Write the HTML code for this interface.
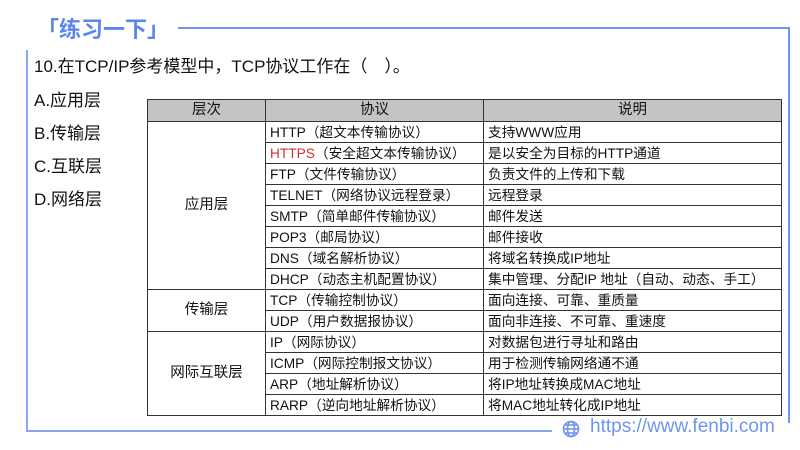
<!DOCTYPE html>
<html><head><meta charset="utf-8"><style>
body{margin:0;width:800px;height:450px;background:#fff;position:relative;overflow:hidden;font-family:"Liberation Sans","Noto Sans CJK SC",sans-serif;}
.abs{position:absolute}
.title{left:37px;top:12px;font-size:22px;font-weight:bold;color:#5b86ee}
.q{left:34px;font-size:17px;color:#111}
table{position:absolute;left:147px;top:99px;width:635px;border-collapse:collapse;font-size:13.7px;color:#111}
td,th{border:1.5px solid #333;padding:0 4px;height:20px;line-height:19px;white-space:nowrap}
th{background:#c4c4c4;font-weight:normal;font-size:14.5px;text-align:center;height:21px}
td.c{text-align:center;font-size:14.5px}
</style></head><body>
<div class="abs title">「练习一下」</div>
<div class="abs" style="left:178px;top:27px;width:612px;height:2px;background:#6f95f0"></div>
<div class="abs" style="left:788px;top:27px;width:2px;height:396px;background:#6f95f0"></div>
<div class="abs" style="left:26px;top:50px;width:2px;height:382px;background:#8aa6f2"></div>
<div class="abs" style="left:26px;top:430px;width:526px;height:2px;background:#8aa6f2"></div>
<div class="abs q" style="top:52px">10.在TCP/IP参考模型中，TCP协议工作在（　）。</div>
<div class="abs q" style="top:86px">A.应用层</div>
<div class="abs q" style="top:119px">B.传输层</div>
<div class="abs q" style="top:152px">C.互联层</div>
<div class="abs q" style="top:185px">D.网络层</div>
<table>
<colgroup><col style="width:118px"><col style="width:218px"><col></colgroup>
<tr><th>层次</th><th>协议</th><th>说明</th></tr>
<tr><td class="c" rowspan="8">应用层</td><td>HTTP（超文本传输协议）</td><td>支持WWW应用</td></tr>
<tr><td><span style="color:#d0302a">HTTPS</span>（安全超文本传输协议）</td><td>是以安全为目标的HTTP通道</td></tr>
<tr><td>FTP（文件传输协议）</td><td>负责文件的上传和下载</td></tr>
<tr><td>TELNET（网络协议远程登录）</td><td>远程登录</td></tr>
<tr><td>SMTP（简单邮件传输协议）</td><td>邮件发送</td></tr>
<tr><td>POP3（邮局协议）</td><td>邮件接收</td></tr>
<tr><td>DNS（域名解析协议）</td><td>将域名转换成IP地址</td></tr>
<tr><td>DHCP（动态主机配置协议）</td><td>集中管理、分配IP 地址（自动、动态、手工）</td></tr>
<tr><td class="c" rowspan="2">传输层</td><td>TCP（传输控制协议）</td><td>面向连接、可靠、重质量</td></tr>
<tr><td>UDP（用户数据报协议）</td><td>面向非连接、不可靠、重速度</td></tr>
<tr><td class="c" rowspan="4">网际互联层</td><td>IP（网际协议）</td><td>对数据包进行寻址和路由</td></tr>
<tr><td>ICMP（网际控制报文协议）</td><td>用于检测传输网络通不通</td></tr>
<tr><td>ARP（地址解析协议）</td><td>将IP地址转换成MAC地址</td></tr>
<tr><td>RARP（逆向地址解析协议）</td><td>将MAC地址转化成IP地址</td></tr>
</table>
<svg class="abs" style="left:562px;top:420px" width="18" height="18" viewBox="0 0 18 18" fill="none" stroke="#6f95f0" stroke-width="1.6"><circle cx="9" cy="9" r="7.5"/><ellipse cx="9" cy="9" rx="3.5" ry="7.5"/><line x1="1.5" y1="9" x2="16.5" y2="9"/><line x1="3" y1="5" x2="15" y2="5"/><line x1="3" y1="13" x2="15" y2="13"/></svg>
<div class="abs" style="left:590px;top:416px;font-size:19px;color:#6f95f0">https://www.fenbi.com</div>
</body></html>
